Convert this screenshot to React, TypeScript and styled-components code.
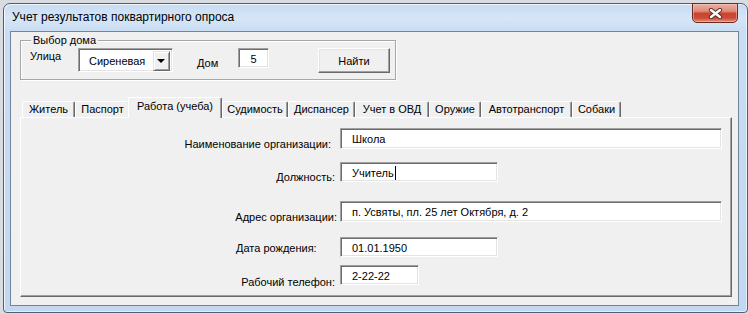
import React from 'react';
import styled, { createGlobalStyle } from 'styled-components';

const Global = createGlobalStyle`
  html, body { margin: 0; padding: 0; }
  body {
    width: 748px;
    height: 314px;
    overflow: hidden;
    background: #d9dde2;
    font-family: "Liberation Sans", Arial, sans-serif;
  }
  * { box-sizing: border-box; }
`;

const Window = styled.div`
  margin: 3px 0 0 3px;
  width: 745px;
  height: 310px;
  border: 1px solid #4f5f72;
  border-radius: 7px 7px 4px 4px;
  background: linear-gradient(to bottom, #c6dbf2 0px, #d6e6f7 14px, #c9ddf3 27px, #c1d8f0 100%);
  box-shadow: inset 1px 1px 0 rgba(255, 255, 255, 0.75), inset -1px -1px 0 rgba(255, 255, 255, 0.6);
  padding: 0 8px 6px 6px;
  display: flex;
  flex-direction: column;
`;

const TitleBar = styled.div`
  height: 27px;
  display: flex;
  justify-content: space-between;
  align-items: flex-start;
  padding-left: 2px;
`;

const Title = styled.div`
  margin-top: 6px;
  font-family: "Liberation Sans", Arial, sans-serif;
  font-size: 12px;
  line-height: 14px;
  color: #000;
`;

const CloseButton = styled.div`
  margin-top: -1px;
  margin-right: 1px;
  width: 46px;
  height: 20px;
  border: 1px solid #6b2a21;
  border-radius: 0 0 5px 5px;
  background: linear-gradient(to bottom, #eab0a3 0%, #e08a78 40%, #c9442e 52%, #cc4c37 78%, #e5917f 100%);
  box-shadow: inset 0 0 0 1px rgba(255, 210, 200, 0.45);
  display: flex;
  align-items: center;
  justify-content: center;
`;

const Client = styled.div`
  height: 275px;
  border: 1px solid #70849b;
  background: #f0f0f0;
  display: flex;
  flex-direction: column;
  align-items: flex-start;
  padding: 8px 0 0 9px;
`;

const GroupBox = styled.div`
  position: relative;
  width: 376px;
  height: 40px;
  border: 1px solid #a6a6a6;
  box-shadow: inset 1px 1px 0 #fff, 1px 1px 0 #fff;
  display: flex;
  align-items: flex-start;
  padding: 7px 0 0 9px;
`;

const Legend = styled.span`
  position: absolute;
  top: -8px;
  left: 10px;
  padding: 0 2px;
  background: #f0f0f0;
  font-size: 11px;
  line-height: 14px;
  color: #000;
`;

const Caption = styled.div<{ $w: number; $top: number; $ml?: number }>`
  width: ${(p) => p.$w}px;
  margin-top: ${(p) => p.$top}px;
  margin-left: ${(p) => p.$ml ?? 0}px;
  font-size: 11px;
  line-height: 14px;
  color: #000;
  white-space: nowrap;
`;

const Sunken = styled.div<{ $w: number; $h: number; $ml?: number }>`
  width: ${(p) => p.$w}px;
  height: ${(p) => p.$h}px;
  margin-left: ${(p) => p.$ml ?? 0}px;
  background: #fff;
  border: 1px solid;
  border-color: #a0a0a0 #fff #fff #a0a0a0;
  box-shadow: inset 1px 1px 0 #6d6d6d, inset -1px -1px 0 #e3e3e3;
  font-size: 11px;
  color: #000;
  white-space: nowrap;
`;

const Combo = styled(Sunken)`
  display: flex;
  align-items: center;
  justify-content: space-between;
  padding: 2px 2px 1px 10px;
`;

const DropButton = styled.div`
  width: 17px;
  height: 20px;
  background: #f0f0f0;
  border: 1px solid;
  border-color: #e3e3e3 #696969 #696969 #e3e3e3;
  box-shadow: inset 1px 1px 0 #fff, inset -1px -1px 0 #a0a0a0;
  display: flex;
  align-items: center;
  justify-content: center;
  &::after {
    content: '';
    border-left: 4px solid transparent;
    border-right: 4px solid transparent;
    border-top: 4px solid #000;
    margin-left: -1px;
  }
`;

const SmallField = styled(Sunken)`
  display: flex;
  align-items: center;
  justify-content: center;
  padding-top: 1px;
`;

const PushButton = styled.div<{ $ml: number }>`
  width: 72px;
  height: 25px;
  margin-left: ${(p) => p.$ml}px;
  background: #f0f0f0;
  border: 1px solid;
  border-color: #fff #696969 #696969 #fff;
  box-shadow: inset -1px -1px 0 #a0a0a0, inset 1px 1px 0 #e3e3e3;
  display: flex;
  align-items: center;
  justify-content: center;
  font-size: 11px;
  color: #000;
`;

const TabStrip = styled.div`
  margin-top: 17px;
  margin-left: 2px;
  height: 20px;
  display: flex;
  align-items: flex-end;
  position: relative;
  z-index: 1;
`;

const Tab = styled.div<{ $w: number; $active?: boolean }>`
  width: ${(p) => (p.$active ? p.$w + 2 : p.$w)}px;
  height: ${(p) => (p.$active ? 21 : 16)}px;
  margin-left: ${(p) => (p.$active ? -2 : 0)}px;
  margin-bottom: ${(p) => (p.$active ? -1 : 0)}px;
  position: relative;
  z-index: ${(p) => (p.$active ? 2 : 1)};
  background: #f0f0f0;
  border: 1px solid;
  border-bottom: none;
  border-color: #fff #696969 #fff #fff;
  border-radius: 2px 2px 0 0;
  box-shadow: inset -1px 0 0 #a0a0a0;
  font-size: 11px;
  line-height: 14px;
  padding-top: ${(p) => (p.$active ? 1 : 0)}px;
  text-align: center;
  color: #000;
  white-space: nowrap;
`;

const Panel = styled.div`
  width: 712px;
  height: 180px;
  background: #f0f0f0;
  border: 1px solid;
  border-color: #fff #696969 #696969 #fff;
  box-shadow: inset -1px -1px 0 #a0a0a0;
  display: flex;
  flex-direction: column;
`;

const Row = styled.div<{ $mt: number }>`
  display: flex;
  align-items: flex-start;
  margin-top: ${(p) => p.$mt}px;
`;

const FieldLabel = styled.div<{ $top: number; $pr?: number; $pl?: number }>`
  width: 319px;
  flex: none;
  margin-top: ${(p) => p.$top}px;
  padding-right: ${(p) => p.$pr ?? 0}px;
  padding-left: ${(p) => p.$pl ?? 0}px;
  text-align: ${(p) => (p.$pl !== undefined ? 'left' : 'right')};
  font-size: 11px;
  line-height: 14px;
  color: #000;
  white-space: nowrap;
`;

const TextField = styled(Sunken)`
  display: flex;
  align-items: center;
  padding: 1px 0 0 11px;
  flex: none;
`;

const Caret = styled.span`
  display: inline-block;
  width: 1px;
  height: 14px;
  background: #000;
  margin-left: 1px;
`;

const tabs: { label: string; w: number; active?: boolean }[] = [
  { label: 'Житель', w: 53 },
  { label: 'Паспорт', w: 55 },
  { label: 'Работа (учеба)', w: 92, active: true },
  { label: 'Судимость', w: 66 },
  { label: 'Диспансер', w: 67 },
  { label: 'Учет в ОВД', w: 74 },
  { label: 'Оружие', w: 52 },
  { label: 'Автотранспорт', w: 91 },
  { label: 'Собаки', w: 49 },
];

export default function App() {
  return (
    <>
      <Global />
      <Window>
        <TitleBar>
          <Title>Учет результатов поквартирного опроса</Title>
          <CloseButton>
            <svg width="15" height="11" viewBox="0 0 15 11">
              <path d="M3 2 L12 9 M12 2 L3 9" stroke="#5a2a24" strokeWidth="4.2" strokeLinecap="round" fill="none" />
              <path d="M3 2 L12 9 M12 2 L3 9" stroke="#fff" strokeWidth="2.4" strokeLinecap="round" fill="none" />
            </svg>
          </CloseButton>
        </TitleBar>
        <Client>
          <GroupBox>
            <Legend>Выбор дома</Legend>
            <Caption $w={48} $top={1}>Улица</Caption>
            <Combo $w={95} $h={24}>
              <span>Сиреневая</span>
              <DropButton />
            </Combo>
            <Caption $w={41} $top={8} $ml={24}>Дом</Caption>
            <SmallField $w={31} $h={20}>5</SmallField>
            <PushButton $ml={49}>Найти</PushButton>
          </GroupBox>
          <TabStrip>
            {tabs.map((t) => (
              <Tab key={t.label} $w={t.w} $active={t.active}>
                {t.label}
              </Tab>
            ))}
          </TabStrip>
          <Panel>
            <Row $mt={10}>
              <FieldLabel $top={9} $pr={9}>Наименование организации:</FieldLabel>
              <TextField $w={382} $h={21}>Школа</TextField>
            </Row>
            <Row $mt={11}>
              <FieldLabel $top={8} $pr={5}>Должность:</FieldLabel>
              <TextField $w={158} $h={20}>
                Учитель<Caret />
              </TextField>
            </Row>
            <Row $mt={17}>
              <FieldLabel $top={9} $pr={3}>Адрес организации:</FieldLabel>
              <TextField $w={382} $h={21}>п. Усвяты, пл. 25 лет Октября, д. 2</TextField>
            </Row>
            <Row $mt={13}>
              <FieldLabel $top={4} $pl={215}>Дата рождения:</FieldLabel>
              <TextField $w={158} $h={20}>01.01.1950</TextField>
            </Row>
            <Row $mt={8}>
              <FieldLabel $top={10} $pr={5}>Рабочий телефон:</FieldLabel>
              <TextField $w={79} $h={20}>2-22-22</TextField>
            </Row>
          </Panel>
        </Client>
      </Window>
    </>
  );
}
